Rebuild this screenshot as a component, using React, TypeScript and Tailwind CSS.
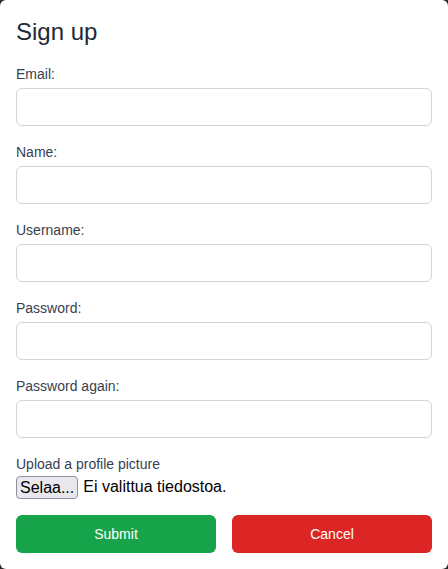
import React from 'react';

const fields = ['Email:', 'Name:', 'Username:', 'Password:', 'Password again:'];

export default function App() {
  return (
    <div className="h-[569px] w-[448px] bg-[#2a2a2a]" style={{ fontFamily: '"Liberation Sans", Arial, sans-serif' }}>
      <div className="h-full rounded-md bg-white p-4">
        <h1 className="mb-4 text-2xl text-[#1f2937]">Sign up</h1>
        {fields.map((label) => (
          <div key={label} className="mb-4">
            <label className="mb-1 block text-sm text-[#374151]">{label}</label>
            <input
              type={label.startsWith('Password') ? 'password' : 'text'}
              className="block h-[38px] w-full rounded-md border border-[#d1d5db] bg-white px-3"
            />
          </div>
        ))}
        {/* Upload */}
        <div className="mb-4">
          <label className="block text-sm text-[#374151]">Upload a profile picture</label>
          <div className="mt-[1px] flex items-center text-base text-black">
            <span className="rounded-[4px] border border-[#8f8f9d] bg-[#e9e9ed] px-[3px] leading-[21px]">Selaa...</span>
            <span className="ml-[5px]">Ei valittua tiedostoa.</span>
          </div>
        </div>
        <div className="flex gap-4">
          <button className="h-[38px] flex-1 rounded-md bg-[#16a34a] text-sm text-white">Submit</button>
          <button className="h-[38px] flex-1 rounded-md bg-[#dc2626] text-sm text-white">Cancel</button>
        </div>
      </div>
    </div>
  );
}
